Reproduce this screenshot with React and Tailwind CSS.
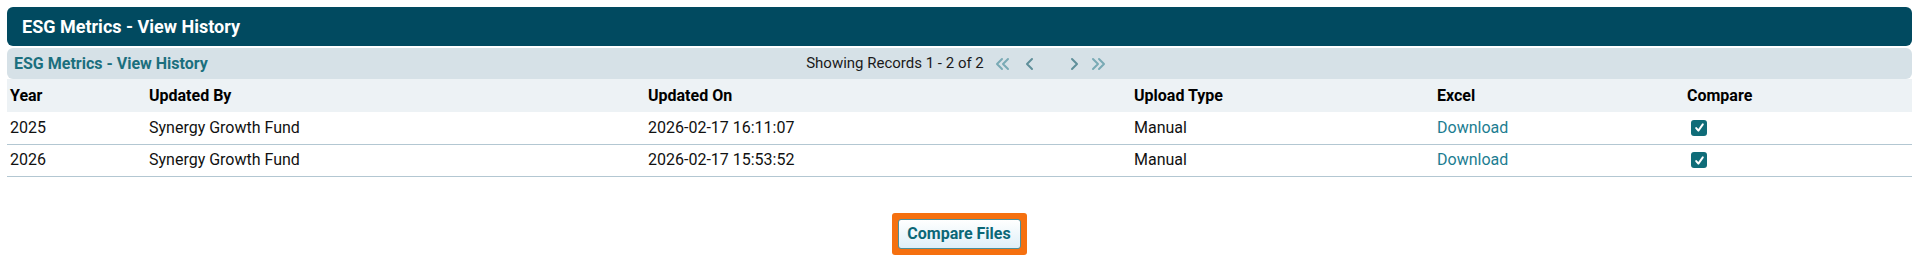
import { useState } from 'react'

const rows = [
  { year: '2025', by: 'Synergy Growth Fund', on: '2026-02-17 16:11:07', type: 'Manual' },
  { year: '2026', by: 'Synergy Growth Fund', on: '2026-02-17 15:53:52', type: 'Manual' },
]

const cols = 'grid grid-cols-[138px_499px_486px_303px_250px_1fr]'

function Chevron({ double, dir = 'left', color }) {
  const flip = dir === 'right' ? 'scale(-1,1) translate(-16,0)' : undefined
  return (
    <svg width="16" height="14" viewBox="0 0 16 14" fill="none" stroke={color} strokeWidth="2" strokeLinecap="round" strokeLinejoin="round">
      <g transform={flip}>
        {double ? (
          <>
            <path d="M7 2L2 7L7 12" />
            <path d="M13 2L8 7L13 12" />
          </>
        ) : (
          <path d="M10 2L5 7L10 12" />
        )}
      </g>
    </svg>
  )
}

function Check({ checked, onToggle }) {
  return (
    <button
      type="button"
      onClick={onToggle}
      className={`ml-[4px] w-[16px] h-[16px] rounded-[3px] flex items-center justify-center ${checked ? 'bg-[#0f6c78]' : 'bg-white border border-[#767676]'}`}
    >
      {checked && (
        <svg width="11" height="11" viewBox="0 0 10 10" fill="none" stroke="white" strokeWidth="1.8" strokeLinecap="round" strokeLinejoin="round">
          <path d="M2 5.5L4 7.8L8 2.2" />
        </svg>
      )}
    </button>
  )
}

export default function App() {
  const [checked, setChecked] = useState([true, true])

  return (
    <div className="font-['Roboto',sans-serif] bg-white h-[271px] pt-[7px] text-[#111]">
      <div className="ml-[7px] mr-[6px]">
        {/* Title bar */}
        <div className="h-[39px] bg-[#014a60] rounded-[6px] flex items-center px-[15px]">
          <h1 className="text-white text-[18px] font-bold">ESG Metrics - View History</h1>
        </div>

        {/* Sub header with pager */}
        <div className="mt-[2px] h-[31px] bg-[#d6e1e7] rounded-[6px] grid grid-cols-[1fr_auto_1fr] items-center px-[7px]">
          <span className="text-[#1b6f7e] text-[16px] font-bold">ESG Metrics - View History</span>
          <div className="flex items-center text-[15px] text-[#1a1a1a] mr-[7px]">
            <span>Showing Records 1 - 2 of 2</span>
            <span className="ml-[11px]"><Chevron double color="#79aab5" /></span>
            <span className="ml-[11px]"><Chevron color="#5f8f9a" /></span>
            <span className="ml-[28px]"><Chevron dir="right" color="#5f8f9a" /></span>
            <span className="ml-[8px]"><Chevron double dir="right" color="#79aab5" /></span>
          </div>
          <span />
        </div>

        {/* Table */}
        <div className={`${cols} h-[33px] items-center bg-[#edf2f5] font-bold text-[16px] text-black`}>
          <div className="pl-[3px]">Year</div>
          <div className="pl-[4px]">Updated By</div>
          <div className="pl-[4px]">Updated On</div>
          <div className="pl-[4px]">Upload Type</div>
          <div className="pl-[4px]">Excel</div>
          <div className="pl-[4px]">Compare</div>
        </div>
        {rows.map((r, i) => (
          <div key={r.year} className={`${cols} h-[32.5px] items-center border-b border-[#b3c7d2] text-[16px]`}>
            <div className="pl-[3px]">{r.year}</div>
            <div className="pl-[4px]">{r.by}</div>
            <div className="pl-[4px]">{r.on}</div>
            <div className="pl-[4px]">{r.type}</div>
            <div className="pl-[4px]">
              <a href="#" className="text-[#1c7d91]">Download</a>
            </div>
            <div className="pl-[4px] flex">
              <Check
                checked={checked[i]}
                onToggle={() => setChecked((c) => c.map((v, j) => (j === i ? !v : v)))}
              />
            </div>
          </div>
        ))}
      </div>

      {/* Compare button */}
      <div className="flex justify-center mt-[36px]">
        <div className="bg-[#f5700f] p-[6px] rounded-[3px]">
          <button
            type="button"
            className="h-[30px] w-[123px] rounded-[3px] border border-[#4d8f99] bg-gradient-to-b from-white to-[#dfeff8] text-[#0b6777] text-[16px] font-bold flex items-center justify-center"
          >
            Compare Files
          </button>
        </div>
      </div>
    </div>
  )
}
